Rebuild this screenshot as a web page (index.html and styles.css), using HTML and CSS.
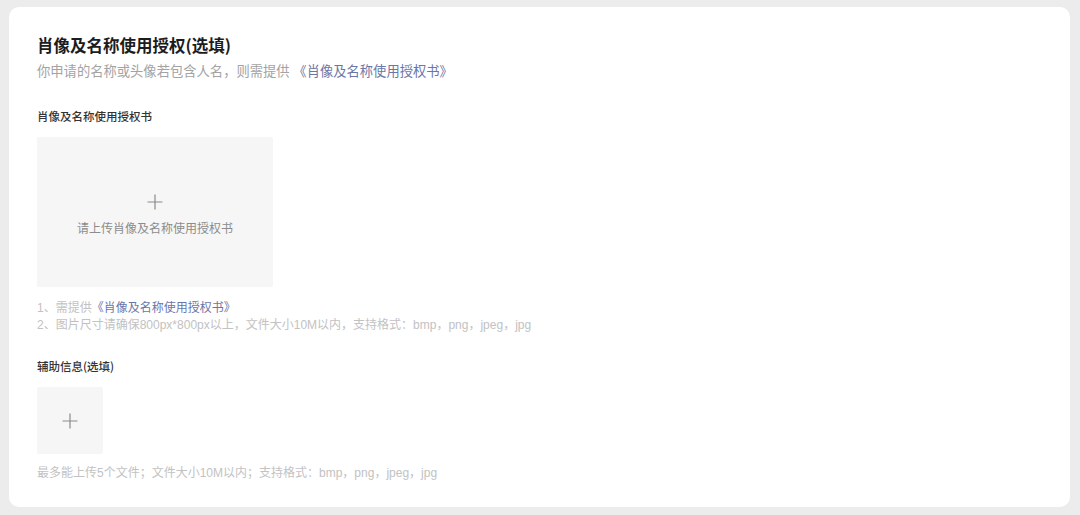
FILE: index.html
```html
<!DOCTYPE html>
<html lang="zh">
<head>
<meta charset="utf-8">
<link rel="stylesheet" href="styles.css">
</head>
<body>
<div class="card">
  <h1 class="title">肖像及名称使用授权(选填)</h1>
  <p class="subtitle">你申请的名称或头像若包含人名，则需提供 <a class="link">《肖像及名称使用授权书》</a></p>

  <div class="field">
    <div class="label">肖像及名称使用授权书</div>
    <div class="upload upload-large">
      <svg class="plus" width="16" height="16" viewBox="0 0 16 16"><path d="M8 0.5V15.5M0.5 8H15.5" stroke="#8a8a8a" stroke-width="1.2" fill="none"/></svg>
      <span class="upload-text">请上传肖像及名称使用授权书</span>
    </div>
    <div class="hints">
      <div>1、需提供<a class="link">《肖像及名称使用授权书》</a></div>
      <div>2、图片尺寸请确保800px*800px以上，文件大小10M以内，支持格式：bmp，png，jpeg，jpg</div>
    </div>
  </div>

  <div class="field field-2">
    <div class="label">辅助信息(选填)</div>
    <div class="upload upload-small">
      <svg class="plus" width="16" height="16" viewBox="0 0 16 16"><path d="M8 0.5V15.5M0.5 8H15.5" stroke="#8a8a8a" stroke-width="1.2" fill="none"/></svg>
    </div>
    <div class="hints hints-tight">最多能上传5个文件；文件大小10M以内；支持格式：bmp，png，jpeg，jpg</div>
  </div>
</div>
</body>
</html>
```

FILE: styles.css
```css
html, body {
  margin: 0;
  padding: 0;
  background: #ececec;
  font-family: "Liberation Sans", "Noto Sans CJK SC", sans-serif;
}
body {
  padding: 7px 10px 8px 9px;
}
.card {
  background: #ffffff;
  border-radius: 10px;
  height: 500px;
  box-sizing: border-box;
  padding: 27px 28px 0 28px;
}
.title {
  margin: 0;
  font-family: "Noto Sans CJK SC", sans-serif;
  font-size: 16.5px;
  line-height: 22px;
  font-weight: 700;
  color: #1c1c1c;
}
.subtitle {
  margin: 6px 0 0 0;
  font-size: 13.3px;
  line-height: 20px;
  color: #a3a3a3;
}
.link {
  color: #6a76a8;
  text-decoration: none;
}
.field {
  margin-top: 25px;
}
.field-2 {
  margin-top: 23px;
}
.label {
  font-family: "Noto Sans CJK SC", sans-serif;
  font-size: 11.5px;
  line-height: 18px;
  font-weight: 500;
  color: #333333;
}
.upload {
  margin-top: 12px;
  background: #f6f6f6;
  border-radius: 2px;
  display: flex;
  flex-direction: column;
  align-items: center;
  justify-content: center;
}
.upload-large {
  width: 236px;
  height: 150px;
}
.upload-large .plus {
  margin-top: 8px;
}
.upload-text {
  margin-top: 10px;
  font-size: 12px;
  line-height: 18px;
  color: #8c8c8c;
}
.upload-small {
  width: 66px;
  height: 67px;
}
.hints {
  margin-top: 13px;
  font-size: 12px;
  line-height: 17px;
  color: #c2c2c2;
}
.hints-tight {
  margin-top: 11px;
}
```
